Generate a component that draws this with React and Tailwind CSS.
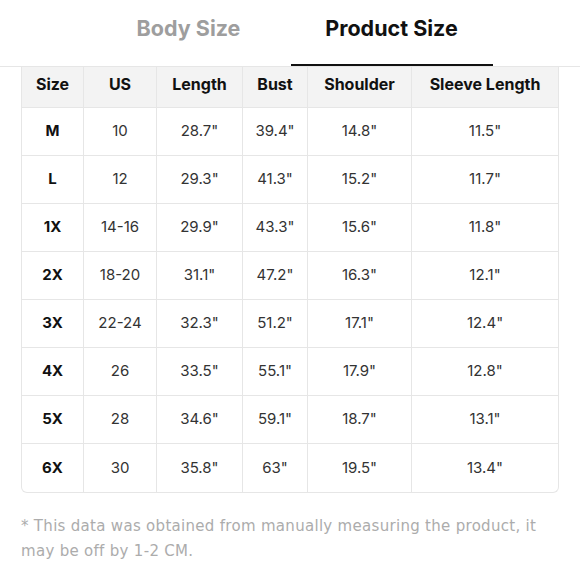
import React from "react";

const rows = [
  ["M", "10", '28.7"', '39.4"', '14.8"', '11.5"'],
  ["L", "12", '29.3"', '41.3"', '15.2"', '11.7"'],
  ["1X", "14-16", '29.9"', '43.3"', '15.6"', '11.8"'],
  ["2X", "18-20", '31.1"', '47.2"', '16.3"', '12.1"'],
  ["3X", "22-24", '32.3"', '51.2"', '17.1"', '12.4"'],
  ["4X", "26", '33.5"', '55.1"', '17.9"', '12.8"'],
  ["5X", "28", '34.6"', '59.1"', '18.7"', '13.1"'],
  ["6X", "30", '35.8"', '63"', '19.5"', '13.4"'],
];

const headers = ["Size", "US", "Length", "Bust", "Shoulder", "Sleeve Length"];

export default function App() {
  return (
    <div className="w-[580px] h-[580px] bg-white font-['Inter',sans-serif] overflow-hidden">
      <div className="flex justify-center gap-[1px] h-[67px] border-b border-[#e6e6e6]">
        <div className="w-[202px] h-[66px] pt-[14px] text-center text-[21.5px] leading-[28px] font-bold text-[#9e9e9e]">
          Body Size
        </div>
        <div className="w-[202px] h-[66px] pt-[14px] text-center text-[21.5px] leading-[28px] font-bold text-[#111] border-b-2 border-[#111]">
          Product Size
        </div>
      </div>
      <div className="ml-[21px] w-[538px] border-x border-b border-[#e6e6e6] rounded-b-[6px] overflow-hidden">
        <div className="grid grid-cols-[62px_73px_86px_65px_104px_146px] h-[41px] bg-[#f3f3f3] border-b border-[#e6e6e6]">
          {headers.map((h, i) => (
            <div
              key={h}
              className={`flex items-center justify-center pb-[6px] text-[16px] font-bold text-[#111] ${i < 5 ? "border-r border-[#e6e6e6]" : ""}`}
            >
              {h}
            </div>
          ))}
        </div>
        {rows.map((r, ri) => (
          <div
            key={r[0]}
            className={`grid grid-cols-[62px_73px_86px_65px_104px_146px] h-[48px] ${ri < rows.length - 1 ? "border-b border-[#e6e6e6]" : ""}`}
          >
            {r.map((c, i) => (
              <div
                key={i}
                className={`flex items-center justify-center text-[15px] ${i === 0 ? "font-bold text-[#111]" : "text-[#333]"} ${i < 5 ? "border-r border-[#e6e6e6]" : ""}`}
              >
                {c}
              </div>
            ))}
          </div>
        ))}
      </div>
      <p className="ml-[21px] w-[537px] mt-[21px] font-['DejaVu_Sans',sans-serif] text-[15px] tracking-[0.3px] leading-[25px] text-[#acacac]">
        * This data was obtained from manually measuring the product, it may be off by 1-2 CM.
      </p>
    </div>
  );
}
